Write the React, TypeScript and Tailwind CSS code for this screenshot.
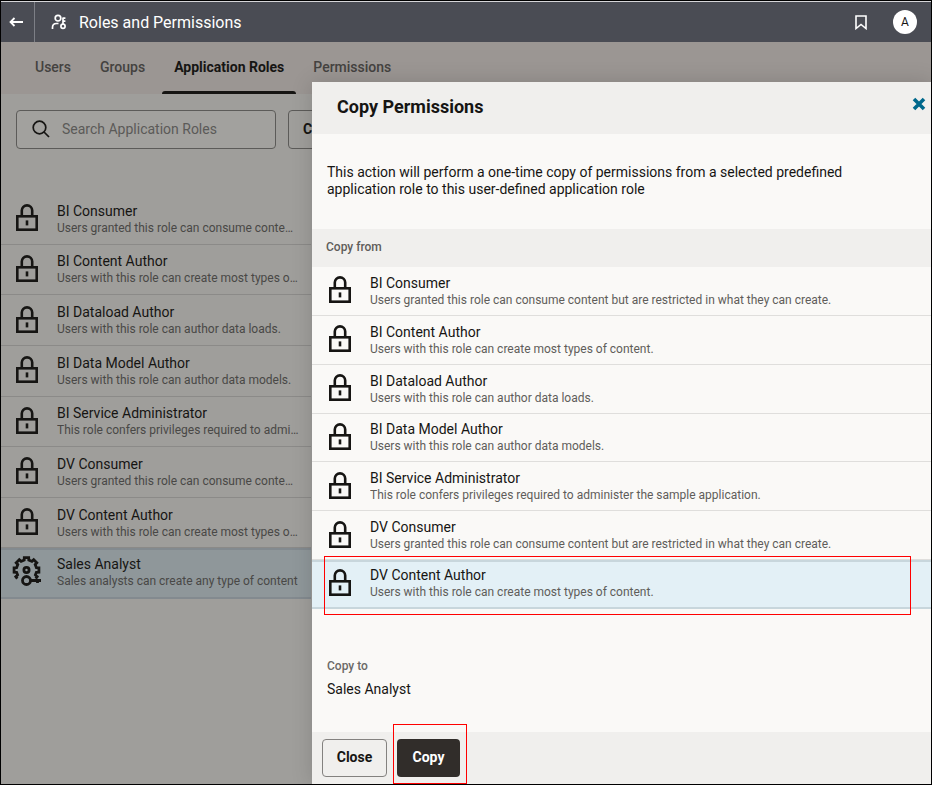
import type { ReactNode } from 'react';

interface Role {
  name: string;
  description: string;
}

const predefinedRoles: Role[] = [
  { name: 'BI Consumer', description: 'Users granted this role can consume content but are restricted in what they can create.' },
  { name: 'BI Content Author', description: 'Users with this role can create most types of content.' },
  { name: 'BI Dataload Author', description: 'Users with this role can author data loads.' },
  { name: 'BI Data Model Author', description: 'Users with this role can author data models.' },
  { name: 'BI Service Administrator', description: 'This role confers privileges required to administer the sample application.' },
  { name: 'DV Consumer', description: 'Users granted this role can consume content but are restricted in what they can create.' },
  { name: 'DV Content Author', description: 'Users with this role can create most types of content.' },
];

const tabs = ['Users', 'Groups', 'Application Roles', 'Permissions'];

function LockIcon() {
  return (
    <svg width="22" height="27" viewBox="0 0 22 27" fill="none" stroke="currentColor" strokeWidth="2.6" aria-hidden="true">
      <rect x="1.3" y="12.3" width="19.4" height="13.4" />
      <path d="M5.8 12V6.6a5.2 5.2 0 0 1 10.4 0V12" />
      <path d="M11 16.4v5" />
    </svg>
  );
}

// gear outline, open at the bottom where the key sits
function gearPoints() {
  const point = (radius: number, angle: number) => {
    const rad = (angle * Math.PI) / 180;
    return `${(14.5 + radius * Math.cos(rad)).toFixed(1)},${(14 + radius * Math.sin(rad)).toFixed(1)}`;
  };
  const points = [point(12.6, 137), point(12.6, 148), point(10.2, 151)];
  for (let angle = 180; angle <= 360; angle += 45) {
    points.push(point(10.2, angle - 13), point(12.6, angle - 10), point(12.6, angle + 10), point(10.2, angle + 13));
  }
  points.push(point(10.2, 389), point(12.6, 392), point(12.6, 403));
  return points.join(' ');
}

function GearKeyIcon() {
  return (
    <svg width="30" height="30" viewBox="0 0 30 30" fill="none" stroke="currentColor" strokeWidth="2.8" aria-hidden="true">
      <polyline points={gearPoints()} />
      <circle cx="14.5" cy="14" r="2.6" />
      <circle cx="14.5" cy="24.5" r="4" />
      <path d="M18.5 24.5H29M25.5 24.5v2.6" />
    </svg>
  );
}

function RoleRow({ role, icon, selected, dimmed }: { role: Role; icon: ReactNode; selected?: boolean; dimmed?: boolean }) {
  const line = dimmed ? 'border-[#8b8a88]' : 'border-[#dfdedc]';
  const highlight = dimmed ? 'border-[#838a8f] bg-[#8f979a]' : 'border-[#c8d6dc] bg-[#e3f0f6]';
  return (
    <li className={`flex min-h-0 items-center overflow-hidden ${selected ? `border-y-2 pb-[3px] ${highlight}` : `border-b ${line}`}`}>
      <span className={`flex shrink-0 justify-center pb-0.5 ${dimmed ? 'w-[52px]' : 'w-14'}`}>{icon}</span>
      <div className={`min-w-0 flex-1 pr-3 ${dimmed ? 'pl-1' : 'pl-0.5'}`}>
        <p className="truncate text-sm leading-[18px]">{role.name}</p>
        <p className={`truncate text-xs leading-4 ${dimmed ? 'text-[#494846]' : 'text-[#5f5d5a]'}`}>{role.description}</p>
      </div>
    </li>
  );
}

function CopyPermissionsDrawer() {
  return (
    <section
      role="dialog"
      aria-labelledby="drawer-title"
      className="absolute top-[81px] right-0 bottom-0 left-[311px] flex flex-col bg-[#faf9f7] shadow-[0_0_20px_rgba(0,0,0,0.15)]"
    >
      <header className="flex h-[52px] shrink-0 items-center justify-between bg-[#f0efed] pr-1 pl-[25px]">
        <h2 id="drawer-title" className="pb-0.5 text-lg font-bold">Copy Permissions</h2>
        <button type="button" aria-label="Close drawer" className="mb-2 text-[#00688c]">
          <svg width="16" height="16" viewBox="0 0 16 16" stroke="currentColor" strokeWidth="3.6">
            <path d="M3 3l10 10M13 3L3 13" />
          </svg>
        </button>
      </header>
      <p className="max-w-[550px] pt-[30px] pl-[15px] text-sm leading-[17px]">
        This action will perform a one-time copy of permissions from a selected predefined application role to this
        user-defined application role
      </p>
      <h3 className="mt-[31px] flex h-[38px] shrink-0 items-center bg-[#f0efed] pb-0.5 pl-[14px] text-xs font-medium text-[#5f5d5a]">
        Copy from
      </h3>
      <div className="relative">
        <ul className="grid h-[342px] auto-rows-fr">
          {predefinedRoles.map((role) => (
            <RoleRow key={role.name} role={role} icon={<LockIcon />} selected={role.name === 'DV Content Author'} />
          ))}
        </ul>
        <span className="absolute right-5 -bottom-1.5 left-3 h-[59px] border border-[#f00]" />
      </div>
      <div className="mt-12 pl-[15px]">
        <p className="text-xs leading-[18px] font-medium text-[#6b6967]">Copy to</p>
        <p className="mt-1 text-sm leading-5">Sales Analyst</p>
      </div>
      <footer className="mt-auto flex h-[52px] shrink-0 items-center gap-[10px] bg-[#f0efed] pl-[10px]">
        <button type="button" className="h-[38px] w-[65px] rounded border border-[#83817f] pb-0.5 text-sm font-bold">
          Close
        </button>
        <div className="relative">
          <button type="button" className="h-[38px] w-[63px] rounded bg-[#312d2a] pb-0.5 text-sm font-bold text-white">
            Copy
          </button>
          <span className="absolute -top-[15px] -right-[7px] -bottom-[7px] -left-1 border border-[#f00]" />
        </div>
      </footer>
    </section>
  );
}

export default function App() {
  return (
    <div className="relative flex min-h-screen flex-col overflow-hidden border border-black bg-[#9f9e9b] font-[Roboto,sans-serif] text-[#161513]">
      <header className="relative z-10 flex h-[41px] shrink-0 items-center border-t border-[#d5d5d8] bg-[#4a4c54] text-white">
        <button type="button" aria-label="Back" className="flex h-full w-[34px] items-center justify-center border-r border-[#7d7f86] pr-1">
          <svg width="14" height="10" viewBox="0 0 14 10" fill="none" stroke="currentColor" strokeWidth="1.8">
            <path d="M14 5H1.5M5.5 1l-4 4 4 4" />
          </svg>
        </button>
        <svg className="ml-4" width="16" height="16" viewBox="0 0 16 16" fill="none" stroke="currentColor" strokeWidth="1.7" aria-hidden="true">
          <circle cx="7" cy="4.2" r="2.8" />
          <path d="M1.5 15v-1.5C1.5 11 3.3 9.5 5.5 9.5h2" />
          <circle cx="12" cy="12.2" r="2.1" />
          <path d="M12 10V3.5M12 4.2h2.4M12 7.2h2.4" />
        </svg>
        <h1 className="ml-3 pt-0.5 text-base">Roles and Permissions</h1>
        <button type="button" aria-label="Bookmark" className="mr-[26px] ml-auto">
          <svg width="12" height="15" viewBox="0 0 12 15" fill="none" stroke="currentColor" strokeWidth="1.6">
            <path d="M1 1h10v12.5L6 9.5l-5 4z" />
          </svg>
        </button>
        <button type="button" className="mr-[14px] h-6 w-6 rounded-full bg-white text-xs text-[#161513]">A</button>
      </header>

      <nav className="flex h-[52px] shrink-0 gap-[5px] bg-[#9b9693] pl-[22px] text-sm font-medium text-[#444240]">
        {tabs.map((tab) => (
          <a
            key={tab}
            href="#"
            className={`flex flex-col justify-between px-3 pt-[15px] ${tab === 'Application Roles' ? 'font-bold text-[#161513]' : ''}`}
          >
            {tab}
            {tab === 'Application Roles' && <span className="-mx-3 h-[3px] rounded-t bg-[#161513]" />}
          </a>
        ))}
      </nav>

      <main className="flex-1">
        <div className="flex gap-3 pt-4 pl-[15px]">
          <label className="flex h-[39px] w-[260px] items-center gap-3 rounded border border-[#5c5b59] bg-[#a2a19e] px-[15px] pb-0.5">
            <svg width="18" height="18" viewBox="0 0 18 18" fill="none" stroke="currentColor" strokeWidth="1.7" aria-hidden="true">
              <circle cx="7.5" cy="7.5" r="6.3" />
              <path d="M12 12l5 5" />
            </svg>
            <input
              type="text"
              aria-label="Search Application Roles"
              placeholder="Search Application Roles"
              className="min-w-0 flex-1 bg-transparent text-sm outline-none placeholder:text-[#5b5a58]"
            />
          </label>
          <button type="button" className="h-[39px] rounded border border-[#5c5b59] px-[14px] pb-0.5 text-sm font-bold">
            Create
          </button>
        </div>
        <ul className="mt-[45px] grid h-[405px] w-[310px] auto-rows-fr">
          {predefinedRoles.map((role) => (
            <RoleRow key={role.name} role={role} icon={<LockIcon />} dimmed />
          ))}
          <RoleRow
            role={{ name: 'Sales Analyst', description: 'Sales analysts can create any type of content' }}
            icon={<GearKeyIcon />}
            selected
            dimmed
          />
        </ul>
      </main>

      <CopyPermissionsDrawer />
    </div>
  );
}
